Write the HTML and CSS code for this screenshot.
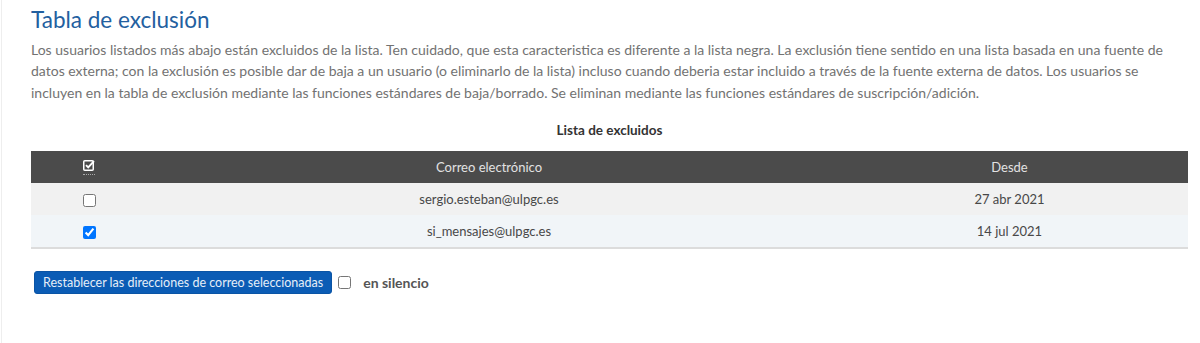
FILE: index.html
```html
<!DOCTYPE html>
<html lang="es">
<head>
<meta charset="utf-8">
<title>Tabla de exclusión</title>
<link rel="stylesheet" href="styles.css">
</head>
<body>
<div class="page">
  <h2 class="title">Tabla de exclusión</h2>
  <p class="intro">Los usuarios listados más abajo están excluidos de la lista. Ten cuidado, que esta caracteristica es diferente a la lista negra. La exclusión tiene sentido en una lista basada en una fuente de datos externa; con la exclusión es posible dar de baja a un usuario (o eliminarlo de la lista) incluso cuando deberia estar incluido a través de la fuente externa de datos. Los usuarios se incluyen en la tabla de exclusión mediante las funciones estándares de baja/borrado. Se eliminan mediante las funciones estándares de suscripción/adición.</p>
  <table class="list">
    <caption>Lista de excluidos</caption>
    <colgroup>
      <col class="c-check">
      <col class="c-mail">
      <col class="c-date">
    </colgroup>
    <thead>
      <tr>
        <th><a class="toggle" href="#"><svg width="12" height="12" viewBox="0 0 12 12"><rect x="0.75" y="1.75" width="9.5" height="9.5" rx="1" fill="none" stroke="#fff" stroke-width="1.5"/><path d="M3 6.2 L5.2 8.4 L11 2.2" fill="none" stroke="#fff" stroke-width="1.9"/></svg></a></th>
        <th>Correo electrónico</th>
        <th>Desde</th>
      </tr>
    </thead>
    <tbody>
      <tr class="odd">
        <td><input type="checkbox"></td>
        <td>sergio.esteban@ulpgc.es</td>
        <td>27 abr 2021</td>
      </tr>
      <tr class="even">
        <td><input type="checkbox" checked></td>
        <td>si_mensajes@ulpgc.es</td>
        <td>14 jul 2021</td>
      </tr>
    </tbody>
  </table>
  <div class="actions">
    <button class="btn" type="button">Restablecer las direcciones de correo seleccionadas</button>
    <label class="quiet"><input type="checkbox"><span>en silencio</span></label>
  </div>
</div>
</body>
</html>
```

FILE: styles.css
```css
html, body {
  margin: 0;
  padding: 0;
  background: #fff;
}
body {
  font-family: Lato, "Open Sans", sans-serif;
  color: #666;
}
.page {
  margin-left: 1px;
  border-left: 1px solid #eee;
  height: 343px;
  box-sizing: border-box;
  padding: 6px 11px 0 29px;
}
.title {
  margin: 0;
  font-size: 22.5px;
  font-weight: 400;
  line-height: 28px;
  color: #23609f;
}
.intro {
  margin: 5px 0 0;
  font-size: 14px;
  line-height: 21.3px;
  color: #727272;
}
.list {
  width: 1157px;
  border-collapse: collapse;
  margin-top: 18px;
  font-size: 13px;
}
.list caption {
  font-weight: 700;
  color: #333;
  font-size: 13.5px;
  line-height: 18px;
  padding-bottom: 12px;
}
.c-check { width: 116px; }
.c-mail { width: 684px; }
.c-date { width: 357px; }
.list th {
  background: #4b4b4b;
  color: #e2e2e2;
  font-weight: 400;
  height: 32px;
  padding: 0;
  text-align: center;
  vertical-align: middle;
}
.list td {
  height: 32px;
  padding: 0;
  text-align: center;
  vertical-align: middle;
  color: #484848;
}
.list tr.odd td { background: #f1f1f1; }
.list tr.even td { background: #f1f5f8; border-bottom: 2px solid #dcdcdc; }
.list td input {
  margin: 0;
  width: 13px;
  height: 13px;
  vertical-align: middle;
}
.toggle {
  display: inline-block;
  text-decoration: none;
  border-bottom: 1px dotted #aaa;
  line-height: 0;
  padding-bottom: 3px;
}
.actions {
  display: flex;
  align-items: center;
  margin-top: 22px;
  padding-left: 3px;
}
.btn {
  font-family: inherit;
  font-size: 12.5px;
  color: #e6eef8;
  background: #0b5cb5;
  border: 1px solid #0a54a5;
  border-radius: 3px;
  height: 23px;
  padding: 0 8px;
  line-height: 21px;
}
.quiet {
  display: flex;
  align-items: center;
  font-size: 14px;
  font-weight: 700;
  color: #555;
}
.quiet input {
  margin: 0 12px 0 6px;
  width: 13px;
  height: 13px;
}
```
